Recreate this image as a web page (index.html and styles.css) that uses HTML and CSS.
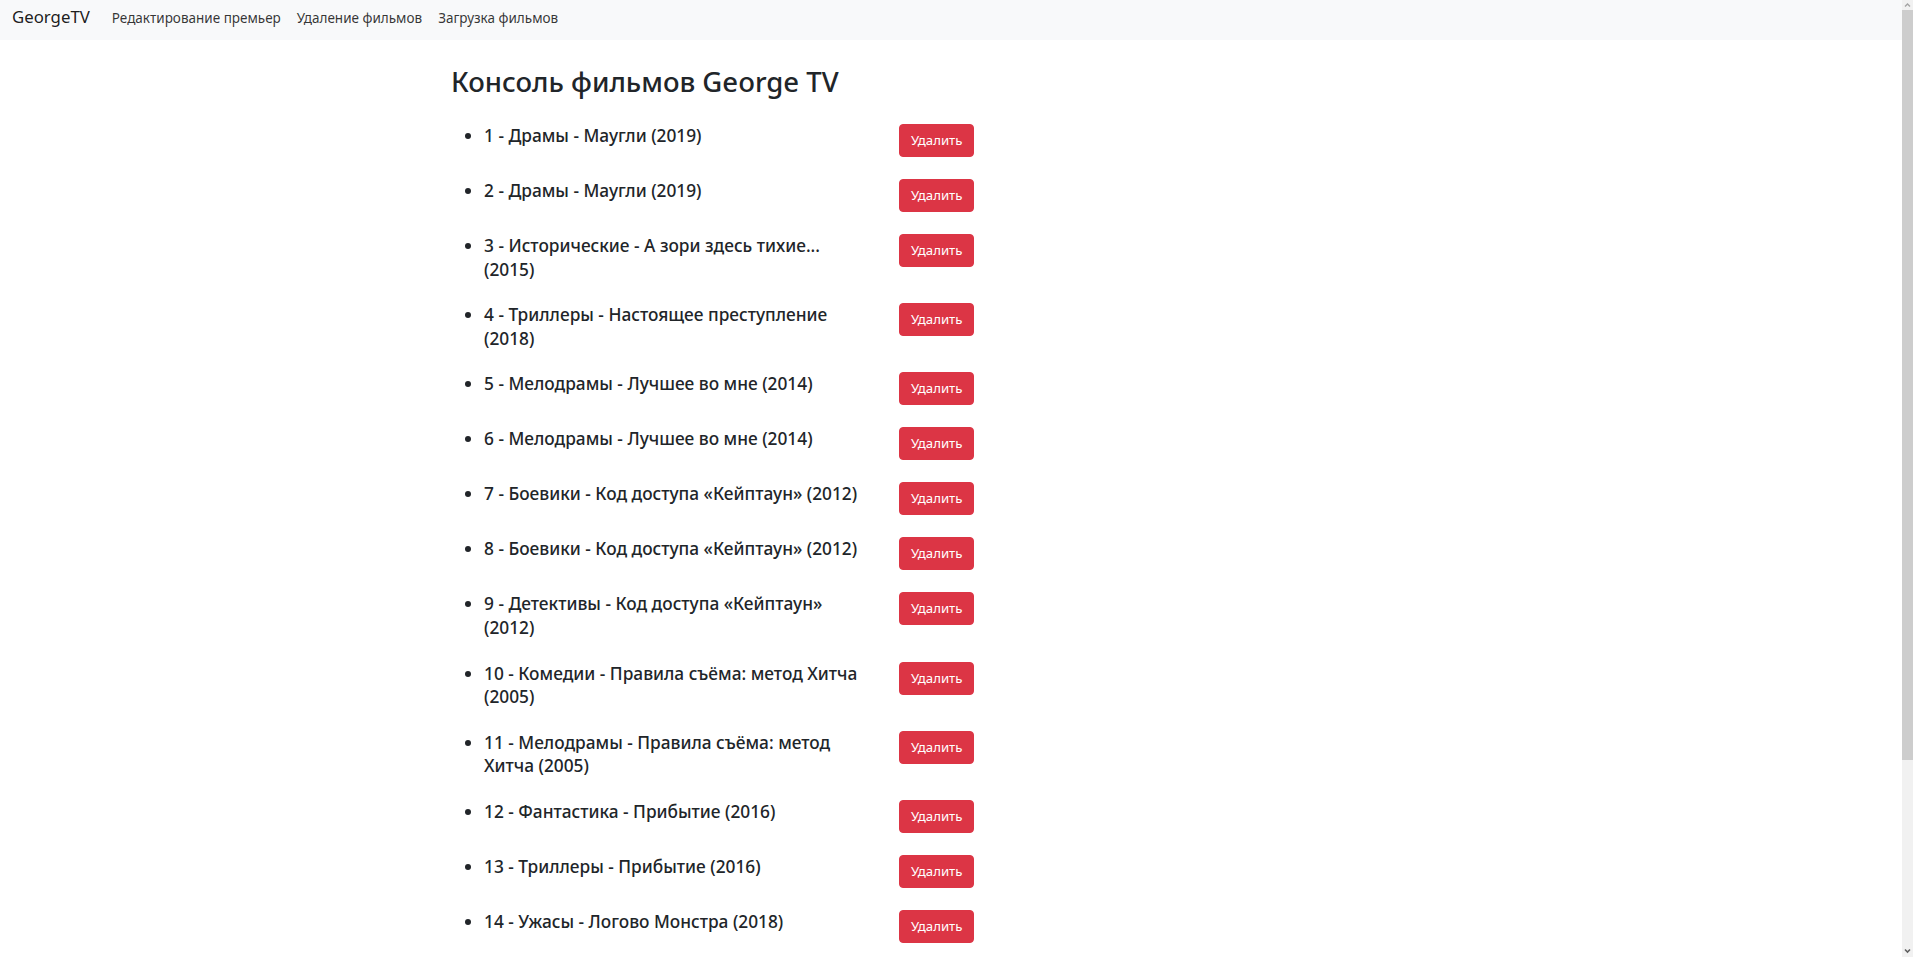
FILE: index.html
```html
<!DOCTYPE html>
<html lang="ru">
<head>
<meta charset="utf-8">
<title>GeorgeTV</title>
<link rel="stylesheet" href="styles.css">
</head>
<body>
<nav class="navbar">
  <a class="brand" href="#">GeorgeTV</a>
  <a class="nav-link" href="#">Редактирование премьер</a>
  <a class="nav-link" href="#">Удаление фильмов</a>
  <a class="nav-link" href="#">Загрузка фильмов</a>
</nav>
<main class="page">
  <h2 class="page-title">Консоль фильмов George TV</h2>
  <ul class="film-list">
    <li><div class="film-row"><span class="film-name">1 - Драмы - Маугли (2019)</span><button class="btn-delete">Удалить</button></div></li>
    <li><div class="film-row"><span class="film-name">2 - Драмы - Маугли (2019)</span><button class="btn-delete">Удалить</button></div></li>
    <li><div class="film-row"><span class="film-name">3 - Исторические - А зори здесь тихие... (2015)</span><button class="btn-delete">Удалить</button></div></li>
    <li><div class="film-row"><span class="film-name">4 - Триллеры - Настоящее преступление (2018)</span><button class="btn-delete">Удалить</button></div></li>
    <li><div class="film-row"><span class="film-name">5 - Мелодрамы - Лучшее во мне (2014)</span><button class="btn-delete">Удалить</button></div></li>
    <li><div class="film-row"><span class="film-name">6 - Мелодрамы - Лучшее во мне (2014)</span><button class="btn-delete">Удалить</button></div></li>
    <li><div class="film-row"><span class="film-name">7 - Боевики - Код доступа «Кейптаун» (2012)</span><button class="btn-delete">Удалить</button></div></li>
    <li><div class="film-row"><span class="film-name">8 - Боевики - Код доступа «Кейптаун» (2012)</span><button class="btn-delete">Удалить</button></div></li>
    <li><div class="film-row"><span class="film-name">9 - Детективы - Код доступа «Кейптаун» (2012)</span><button class="btn-delete">Удалить</button></div></li>
    <li><div class="film-row"><span class="film-name">10 - Комедии - Правила съёма: метод Хитча (2005)</span><button class="btn-delete">Удалить</button></div></li>
    <li><div class="film-row"><span class="film-name">11 - Мелодрамы - Правила съёма: метод Хитча (2005)</span><button class="btn-delete">Удалить</button></div></li>
    <li><div class="film-row"><span class="film-name">12 - Фантастика - Прибытие (2016)</span><button class="btn-delete">Удалить</button></div></li>
    <li><div class="film-row"><span class="film-name">13 - Триллеры - Прибытие (2016)</span><button class="btn-delete">Удалить</button></div></li>
    <li><div class="film-row"><span class="film-name">14 - Ужасы - Логово Монстра (2018)</span><button class="btn-delete">Удалить</button></div></li>
  </ul>
</main>
<div class="scrollbar" aria-hidden="true">
  <svg class="scroll-arrow" width="11" height="10" viewBox="0 0 11 10"><path d="M3 6.5 L5.5 4 L8 6.5" fill="none" stroke="#a3a3a3" stroke-width="1.4"/></svg>
  <div class="scroll-thumb"></div>
  <div class="scroll-rest"></div>
  <svg class="scroll-arrow" width="11" height="12" viewBox="0 0 11 12"><path d="M3 4.5 L5.5 7 L8 4.5" fill="none" stroke="#606060" stroke-width="1.6"/></svg>
</div>
</body>
</html>
```
FILE: styles.css
```css
body {
  margin: 0;
  font-family: "Noto Sans", "Open Sans", sans-serif;
  color: #212529;
  background: #fff;
}
.navbar {
  display: flex;
  align-items: baseline;
  box-sizing: border-box;
  height: 40px;
  padding: 4px 12px 0;
  background: #f8f9fa;
}
.brand {
  font-size: 16.8px;
  line-height: 25px;
  color: rgba(0,0,0,.9);
  text-decoration: none;
  margin-right: 14px;
}
.nav-link {
  font-size: 13.5px;
  color: rgba(0,0,0,.8);
  text-decoration: none;
  padding: 0 8px;
}
.page { padding: 25px 0 240px 451px; }
.page-title {
  font-size: 27.5px;
  font-weight: 500;
  line-height: 1.2;
  margin: 0 0 26px;
}
.film-list { margin: 0; padding-left: 33px; }
.film-list li {
  margin-bottom: 22px;
  font-size: 17.3px;
  line-height: 23.6px;
}
.film-row { display: flex; align-items: flex-start; }
.film-name {
  flex: 0 0 386px;
  margin-right: 29px;
  font-weight: 500;
}
.btn-delete {
  font-family: inherit;
  font-size: 13.2px;
  line-height: 21px;
  color: #fff;
  background: #dc3545;
  border: 1px solid #dc3545;
  border-radius: 4px;
  padding: 5px 11px;
}
.scrollbar {
  position: fixed;
  top: 0;
  right: 0;
  bottom: 0;
  width: 11px;
  display: flex;
  flex-direction: column;
  background: #f1f1f1;
}
.scroll-arrow { flex: none; display: block; }
.scroll-thumb { flex: none; height: 750px; background: #cdcdcd; }
.scroll-rest { flex: 1; }
```
